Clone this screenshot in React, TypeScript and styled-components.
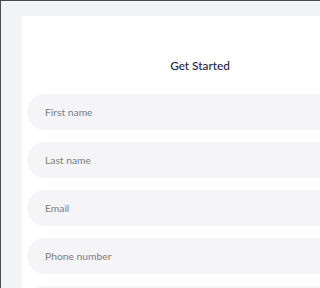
import styled, { createGlobalStyle } from 'styled-components';

const GlobalStyle = createGlobalStyle`
  html, body {
    margin: 0;
    padding: 0;
    background: #f3f4f6;
    overflow: hidden;
  }
  body {
    font-family: Lato, 'Open Sans', sans-serif;
  }
`;

const fields = ['First name', 'Last name', 'Email', 'Phone number', 'Password'];

const App = () => {
  return (
    <>
      <GlobalStyle />
      <Page>
        <Card>
          <Title>Get Started</Title>
          <Form>
            {fields.map((field) => (
              <Input key={field} placeholder={field} />
            ))}
          </Form>
        </Card>
      </Page>
    </>
  );
};

export default App;

const Page = styled.div`
  width: 100%;
  height: 288px;
  box-sizing: border-box;
  border-top: 1px solid #4a4a4a;
  border-left: 1px solid #4a4a4a;
  padding: 15px 0 0 21px;
  background: #f3f4f6;
  overflow: hidden;
`;

const Card = styled.div`
  width: 356px;
  min-height: 400px;
  background: #ffffff;
  padding: 37px 5px 0;
  box-sizing: border-box;
  display: flex;
  flex-direction: column;
  align-items: center;
`;

const Title = styled.h1`
  margin: 0;
  font-family: Lato, 'Open Sans', sans-serif;
  font-size: 11.8px;
  font-weight: 500;
  color: #1f1d3d;
  line-height: 26px;
`;

const Form = styled.div`
  width: 100%;
  margin-top: 15px;
  display: flex;
  flex-direction: column;
  gap: 12px;
`;

const Input = styled.input`
  width: 100%;
  height: 36px;
  box-sizing: border-box;
  border: none;
  outline: none;
  border-radius: 18px;
  background: #f5f5f7;
  padding: 0 18px;
  font-family: Lato, 'Open Sans', sans-serif;
  font-size: 10.3px;
  color: #333;

  &::placeholder {
    color: #7c7c86;
  }
`;
